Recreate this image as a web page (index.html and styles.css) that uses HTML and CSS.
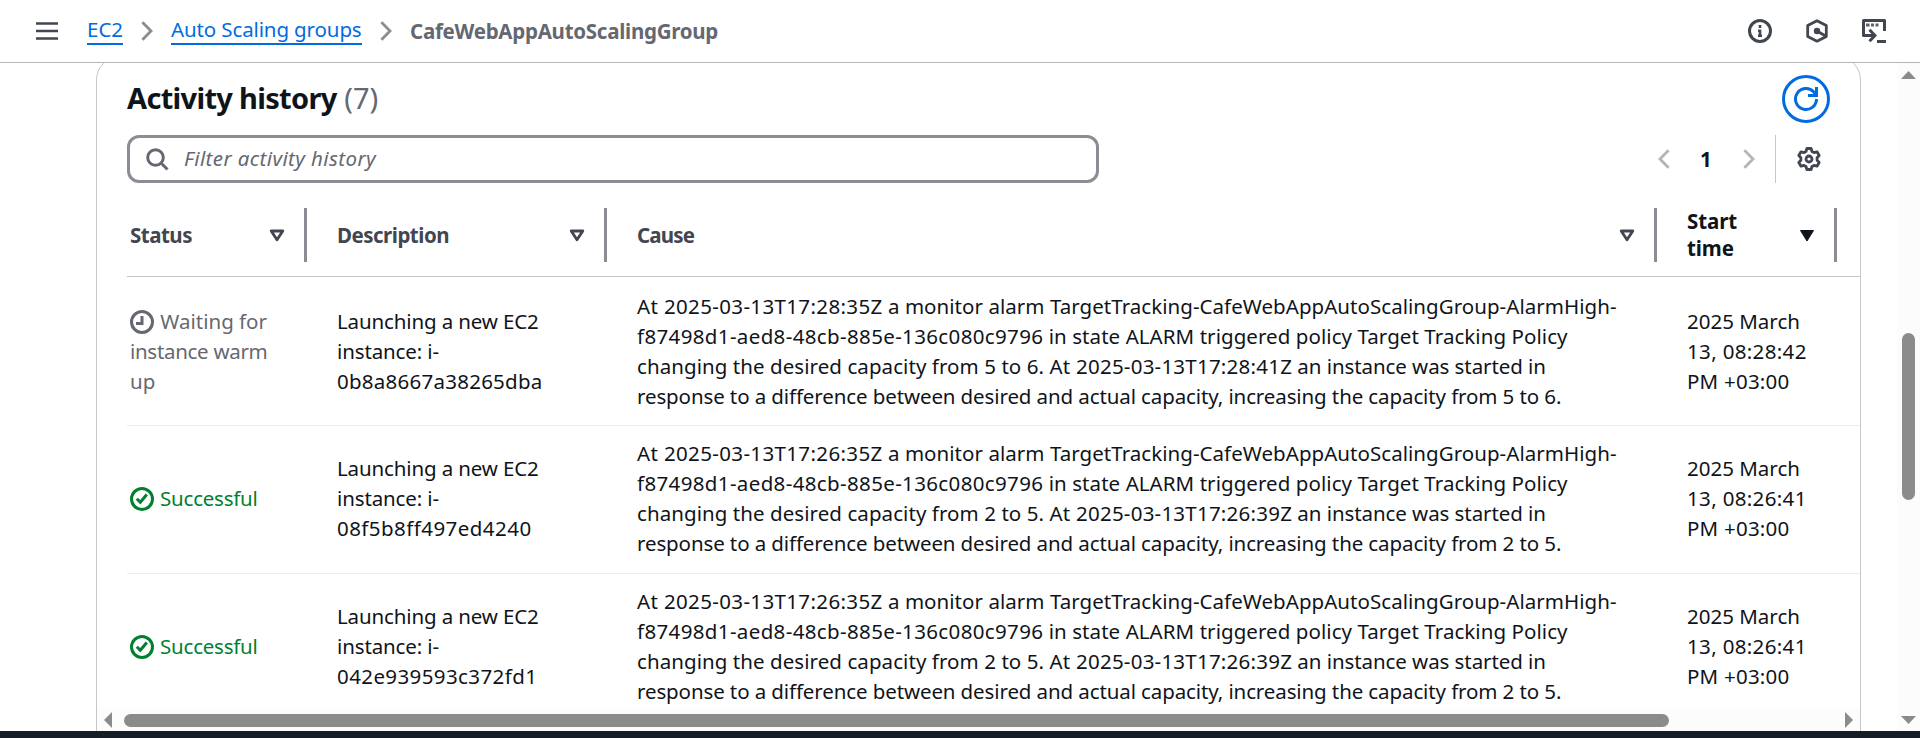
FILE: index.html
```html
<!DOCTYPE html>
<html lang="en">
<head>
<meta charset="utf-8">
<title>Auto Scaling groups</title>
<link rel="stylesheet" href="styles.css">
</head>
<body>
<svg class="defs" width="0" height="0">
  <symbol id="sort" viewBox="0 0 16 13"><path d="M2.2 2h11.6L8 10.8z" fill="none" stroke="currentColor" stroke-width="2.8" stroke-linejoin="round"/></symbol>
  <symbol id="chev" viewBox="0 0 12 20"><path d="M1.4 1.2 10 10l-8.600 8.800" fill="none" stroke="currentColor" stroke-width="2.800"/></symbol>
  <symbol id="check" viewBox="0 0 24 24"><g fill="none" stroke="currentColor" stroke-width="3"><circle cx="12" cy="12" r="10.500"/><path d="m6.800 11.800 3.500 3.500 6.500-7.800"/></g></symbol>
</svg>
<header class="topbar">
  <svg class="burger" width="22" height="18" viewBox="0 0 22 18"><path d="M0 1.500h22M0 9h22M0 16.500h22" stroke="#424650" stroke-width="2.700"/></svg>
  <nav class="crumbs">
    <a class="c-ec2">EC2</a>
    <svg class="sep" width="12" height="20"><use href="#chev"/></svg>
    <a class="c-asg">Auto Scaling groups</a>
    <svg class="sep" width="12" height="20"><use href="#chev"/></svg>
    <strong>CafeWebAppAutoScalingGroup</strong>
  </nav>
  <div class="tools">
    <svg width="24" height="24" viewBox="0 0 24 24" fill="none" stroke="#424650" stroke-width="3"><circle cx="12" cy="12" r="10.500"/><path d="M12 6v3M12 10.500V18M10 11.800h2M10 16.700h4" stroke-width="2.600"/></svg>
    <svg width="24" height="24" viewBox="0 0 24 24" fill="none" stroke="#424650" stroke-width="2.800"><path d="M12 1.800 21.300 6.600v10.800L12 22.200 2.700 17.400V6.600z" stroke-linejoin="round"/><circle cx="12" cy="12" r="3.200" fill="#424650" stroke="none"/><path d="m12 12 9 5.200"/></svg>
    <svg width="24" height="24" viewBox="0 0 24 24" fill="none" stroke="#424650" stroke-width="3"><path d="M6 16.500H1.500v-15h21V12" stroke-linejoin="round"/><path d="M4 6h3.600M9 6h3M13.500 6h3" stroke-width="3" opacity=".85"/><path d="M4.500 16.500h8.500M7.500 10.800l5.400 5.700-5.400 5.700M15 22.500h9"/></svg>
  </div>
</header>
<main class="page">
  <section class="panel">
    <div class="title-row">
      <h2><span class="title">Activity history</span> <span class="count">(7)</span></h2>
      <button class="refresh"><svg width="26" height="26" viewBox="0 0 26 26" fill="none" stroke="#006ce0" stroke-width="3"><path d="M23.500 13A10.500 10.500 0 1 1 20.800 6L23 8.500M23.500 1v8.500H15"/></svg></button>
    </div>
    <div class="filter-row">
      <div class="search">
        <svg width="23" height="23" viewBox="0 0 23 23" fill="none" stroke="#656871" stroke-width="3"><circle cx="9.500" cy="9.500" r="7.800"/><path d="m15 15 6.500 6.500"/></svg>
        <span>Filter activity history</span>
      </div>
      <div class="pager">
        <svg class="prev" width="12" height="20"><use href="#chev"/></svg>
        <b>1</b>
        <svg width="12" height="20"><use href="#chev"/></svg>
        <div class="gear"><svg width="24" height="24" viewBox="0 0 24 24" fill="none" stroke="#424650" stroke-width="2.800" stroke-linejoin="round"><circle cx="12" cy="12" r="3"/><path d="M9.900 1.500h4.200l.9 3 2 1.100 3-.8 2.200 3.700-2.100 2.300v2.400l2.100 2.300-2.200 3.700-3-.8-2 1.100-.9 3H9.900l-.9-3-2-1.100-3 .8-2.200-3.700 2.100-2.300v-2.400L1.800 8.500 4 4.800l3 .8 2-1.100z"/></svg></div>
      </div>
    </div>
    <div class="grid head">
      <div class="th"><span>Status</span><svg width="16" height="13"><use href="#sort"/></svg></div>
      <div class="th"><span>Description</span><svg width="16" height="13"><use href="#sort"/></svg></div>
      <div class="th"><span class="cz">Cause</span><svg width="16" height="13"><use href="#sort"/></svg></div>
      <div class="th active"><span>Start<br>time</span><svg width="16" height="13" viewBox="0 0 16 13"><path d="M1.500 1.500h13L8 12z" fill="#0f141a" stroke="#0f141a" stroke-linejoin="round"/></svg></div>
    </div>
    <div class="grid row first">
      <div class="status wait"><svg width="24" height="24" viewBox="0 0 24 24" fill="none" stroke="currentColor" stroke-width="3"><circle cx="12" cy="12" r="10.500"/><path d="M12 6v7.500H6"/></svg> Waiting for<br><span class="iw">instance warm</span><br>up</div>
      <div><span class="d1">Launching a new EC2</span><br><span class="d1">instance: i-</span><br><span class="d2">0b8a8667a38265dba</span></div>
      <div class="cause"><span class="date">At 2025-03-13T17:28:35Z</span><span class="l1"> a monitor alarm TargetTracking-CafeWebAppAutoScalingGroup-AlarmHigh-</span><br><span class="date">f87498d1-aed8-48cb-885e-136c080c9796</span><span class="l2"> in state ALARM triggered policy Target Tracking Policy</span><br><span class="l3">changing the desired capacity from 5 to 6. </span><span class="date3">At 2025-03-13T17:28:41Z</span><span class="l3b"> an instance was started in</span><br><span class="l4">response to a difference between desired and actual capacity, increasing the capacity from 5 to 6.</span></div>
      <div>2025 March<br><span class="t2">13, 08:28:42</span><br><span class="t3">PM +03:00</span></div>
    </div>
    <div class="grid row">
      <div class="status ok"><svg width="24" height="24"><use href="#check"/></svg> Successful</div>
      <div><span class="d1">Launching a new EC2</span><br><span class="d1">instance: i-</span><br><span class="d3">08f5b8ff497ed4240</span></div>
      <div class="cause"><span class="date">At 2025-03-13T17:26:35Z</span><span class="l1"> a monitor alarm TargetTracking-CafeWebAppAutoScalingGroup-AlarmHigh-</span><br><span class="date">f87498d1-aed8-48cb-885e-136c080c9796</span><span class="l2"> in state ALARM triggered policy Target Tracking Policy</span><br><span class="l3">changing the desired capacity from 2 to 5. </span><span class="date3">At 2025-03-13T17:26:39Z</span><span class="l3b"> an instance was started in</span><br><span class="l4">response to a difference between desired and actual capacity, increasing the capacity from 2 to 5.</span></div>
      <div>2025 March<br><span class="t2">13, 08:26:41</span><br><span class="t3">PM +03:00</span></div>
    </div>
    <div class="grid row">
      <div class="status ok"><svg width="24" height="24"><use href="#check"/></svg> Successful</div>
      <div><span class="d1">Launching a new EC2</span><br><span class="d1">instance: i-</span><br><span class="d4">042e939593c372fd1</span></div>
      <div class="cause"><span class="date">At 2025-03-13T17:26:35Z</span><span class="l1"> a monitor alarm TargetTracking-CafeWebAppAutoScalingGroup-AlarmHigh-</span><br><span class="date">f87498d1-aed8-48cb-885e-136c080c9796</span><span class="l2"> in state ALARM triggered policy Target Tracking Policy</span><br><span class="l3">changing the desired capacity from 2 to 5. </span><span class="date3">At 2025-03-13T17:26:39Z</span><span class="l3b"> an instance was started in</span><br><span class="l4">response to a difference between desired and actual capacity, increasing the capacity from 2 to 5.</span></div>
      <div>2025 March<br><span class="t2">13, 08:26:41</span><br><span class="t3">PM +03:00</span></div>
    </div>
    <div class="hscroll">
      <svg width="8" height="16"><path d="M8 0v16L0 8z" fill="#8b8b8b"/></svg>
      <i></i>
      <svg width="8" height="16"><path d="M0 0v16l8-8z" fill="#8b8b8b"/></svg>
    </div>
  </section>
  <div class="vscroll">
    <svg width="15" height="8"><path d="M0 8h15L7.500 0z" fill="#8b8b8b"/></svg>
    <i></i>
    <svg width="15" height="8"><path d="M0 0h15L7.500 8z" fill="#8b8b8b"/></svg>
  </div>
</main>
<footer class="footer"></footer>
</body>
</html>
```

FILE: styles.css
```css
* { box-sizing: border-box; }
body { margin: 0; height: 738px; overflow: hidden; display: flex; flex-direction: column; background: #fff; color: #0f141a; font: 20.5px/30px "Noto Sans", "Open Sans", sans-serif; }
svg { display: block; flex: none; }
.defs { display: none; }
.topbar { height: 63px; flex: none; display: flex; align-items: center; padding: 0 34px 0 36px; border-bottom: 1px solid #b4b4bb; background: #fff; }
.crumbs { display: flex; align-items: center; margin-left: 29px; }
.crumbs a { color: #006ce0; line-height: 25px; padding-bottom: 1px; border-bottom: 2px solid #006ce0; }
.c-ec2 { width: 36px; }
.c-asg { width: 191px; letter-spacing: -.12px; white-space: nowrap; }
.sep { color: #8c8c94; margin: 0 18px; }
.crumbs strong { color: #656871; letter-spacing: -.265px; }
.tools { display: flex; gap: 33px; margin-left: auto; }
.page { height: 668px; flex: none; display: flex; justify-content: space-between; overflow: hidden; }
.panel { width: 1765px; height: 720px; margin: -7px 0 0 96px; border: 1px solid #c6c6cd; border-radius: 24px; display: flex; flex-direction: column; }
.title-row { display: flex; justify-content: space-between; height: 48px; margin: 18px 30px 0; align-items: center; }
h2 { margin: 0; font-size: 29px; line-height: 36px; padding-bottom: 2px; }
.title { letter-spacing: -.68px; }
.count { font-weight: 400; color: #656871; }
.refresh { width: 48px; height: 48px; border: 3px solid #006ce0; border-radius: 50%; background: #fff; padding: 0; display: flex; align-items: center; justify-content: center; }
.filter-row { display: flex; justify-content: space-between; height: 48px; margin: 12px 30px 0; }
.search { width: 972px; border: 3px solid #8c8c94; border-radius: 12px; display: flex; align-items: center; gap: 15px; padding-left: 16px; color: #656871; font-style: italic; letter-spacing: .41px; }
.search span { padding-bottom: 2px; }
.pager { display: flex; align-items: center; color: #b4b4bb; }
.pager b { color: #0f141a; width: 12px; margin: 0 31px 0 30px; }
.prev { transform: scaleX(-1); }
.gear { height: 48px; border-left: 1px solid #c6c6cd; margin-left: 20px; padding: 0 9px 0 21px; display: flex; align-items: center; }
.grid { display: grid; grid-template-columns: 180px 300px 1050px 180px 1fr; margin-left: 30px; align-items: center; }
.head { height: 94px; flex: none; border-bottom: 1px solid #c6c6cd; color: #424650; font-weight: 700; line-height: 27px; letter-spacing: -.5px; padding-top: 9px; }
.th { height: 54px; border-right: 3px solid #8c8c94; display: flex; align-items: center; justify-content: space-between; padding: 0 19px 0 30px; margin-top: 2px; }
.th:first-child { padding-left: 3px; }
.active { color: #0f141a; letter-spacing: -.1px; }
.cz { letter-spacing: -.85px; }
.row { height: 148px; flex: none; border-bottom: 1px solid #ebebf0; white-space: nowrap; padding-bottom: 3px; }
.row.first { height: 149px; padding-bottom: 0; }
.row > div { padding-left: 30px; }
.row > .status { padding-left: 3px; }
.status svg { display: inline-block; vertical-align: -5px; margin-right: 1px; }
.wait { color: #656871; }
.ok { color: #00802f; letter-spacing: -.24px; }
.iw { letter-spacing: -.3px; }
.date { letter-spacing: .36px; }
.date3 { letter-spacing: .23px; }
.l1 { letter-spacing: .045px; }
.l2 { letter-spacing: .065px; }
.l3 { letter-spacing: .07px; }
.l3b { letter-spacing: -.07px; }
.l4 { letter-spacing: -.108px; }
.d1 { letter-spacing: -.13px; }
.d2 { letter-spacing: .25px; }
.d3 { letter-spacing: .45px; }
.d4 { letter-spacing: .4px; }
.t2 { letter-spacing: .34px; }
.t3 { letter-spacing: .22px; }
.hscroll { height: 24px; flex: none; margin-top: -14px; background: #fcfcfc; display: flex; align-items: center; padding: 0 7px; position: relative; }
.hscroll i { width: 1545px; height: 13px; border-radius: 7px; background: #8b8b8b; margin: 0 auto 0 12px; }
.vscroll { width: 23px; background: #fcfcfc; display: flex; flex-direction: column; align-items: center; padding: 8px 0 7px; }
.vscroll i { width: 13px; height: 167px; border-radius: 7px; background: #8b8b8b; margin: 254px 0 auto; }
.footer { height: 7px; flex: none; background: #161d26; }
```
